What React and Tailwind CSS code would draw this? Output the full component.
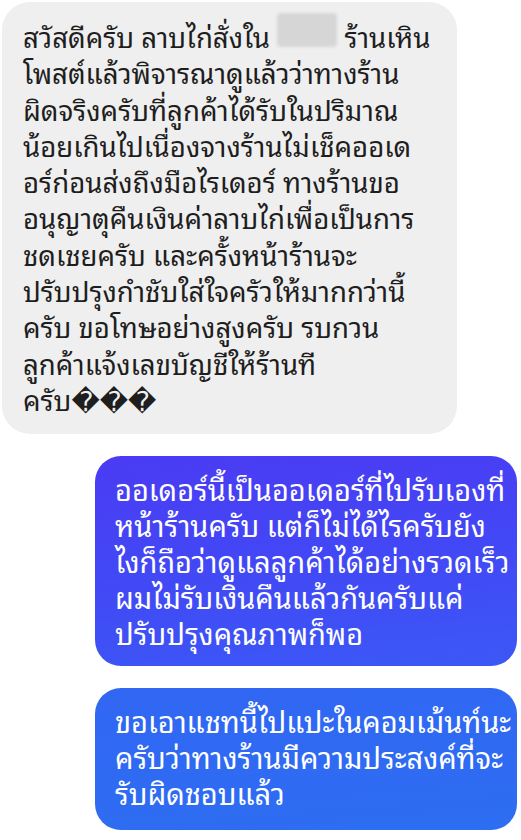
const grey = [
  <>สวัสดีครับ ลาบไก่สั่งใน <span className="inline-block h-[34px] w-[60px] translate-y-[-1px] rounded-[4px] bg-[#d6d6d6] blur-[1.5px] align-baseline" /> ร้านเหิน</>,
  "โพสต์แล้วพิจารณาดูแล้วว่าทางร้าน",
  "ผิดจริงครับที่ลูกค้าได้รับในปริมาณ",
  "น้อยเกินไปเนื่องจางร้านไม่เช็คออเด",
  "อร์ก่อนส่งถึงมือไรเดอร์ ทางร้านขอ",
  "อนุญาตุคืนเงินค่าลาบไก่เพื่อเป็นการ",
  "ชดเชยครับ และครั้งหน้าร้านจะ",
  "ปรับปรุงกำชับใส่ใจครัวให้มากกว่านี้",
  "ครับ ขอโทษอย่างสูงครับ รบกวน",
  "ลูกค้าแจ้งเลขบัญชีให้ร้านที",
  <>ครับ<span className="font-['DejaVu_Sans']">{"\uFFFD\uFFFD\uFFFD"}</span></>,
];

const blue1 = [
  "ออเดอร์นี้เป็นออเดอร์ที่ไปรับเองที่",
  "หน้าร้านครับ แต่ก็ไม่ได้ไรครับยัง",
  "ไงก็ถือว่าดูแลลูกค้าได้อย่างรวดเร็ว",
  "ผมไม่รับเงินคืนแล้วกันครับแค่",
  "ปรับปรุงคุณภาพก็พอ",
];

const blue2 = [
  "ขอเอาแชทนี้ไปแปะในคอมเม้นท์นะ",
  "ครับว่าทางร้านมีความประสงค์ที่จะ",
  "รับผิดชอบแล้ว",
];

export default function App() {
  return (
    <div className="min-h-[840px] w-[521px] overflow-hidden bg-white font-['Noto_Sans_Thai_Looped','Noto_Sans_Thai','Noto_Sans',sans-serif]">
      <div className="flex flex-col pt-[2px]">
        <div className="ml-[2px] w-[455px] rounded-[28px] bg-[#efefef] px-[21px] pb-[14px] pt-[12px] text-[27.6px] leading-[36.3px] text-[#1e1e1e]">
          {grey.map((line, i) => (
            <div key={i} className="whitespace-nowrap">{line}</div>
          ))}
        </div>

        <div className="ml-[95px] mt-[22px] w-[422px] rounded-[26px] bg-[linear-gradient(175deg,#4b3bf4_0%,#4248f5_50%,#3b58f6_100%)] px-[20px] pb-[16px] pt-[14px] text-[29px] leading-[36px] text-white">
          {blue1.map((line, i) => (
            <div key={i} className="whitespace-nowrap">{line}</div>
          ))}
        </div>

        <div className="ml-[95px] mt-[22px] w-[422px] rounded-[26px] bg-[linear-gradient(175deg,#3166f3_0%,#2d6ef2_100%)] px-[20px] pb-[20px] pt-[14px] text-[29px] leading-[36px] text-white">
          {blue2.map((line, i) => (
            <div key={i} className="whitespace-nowrap">{line}</div>
          ))}
        </div>
      </div>
    </div>
  );
}
